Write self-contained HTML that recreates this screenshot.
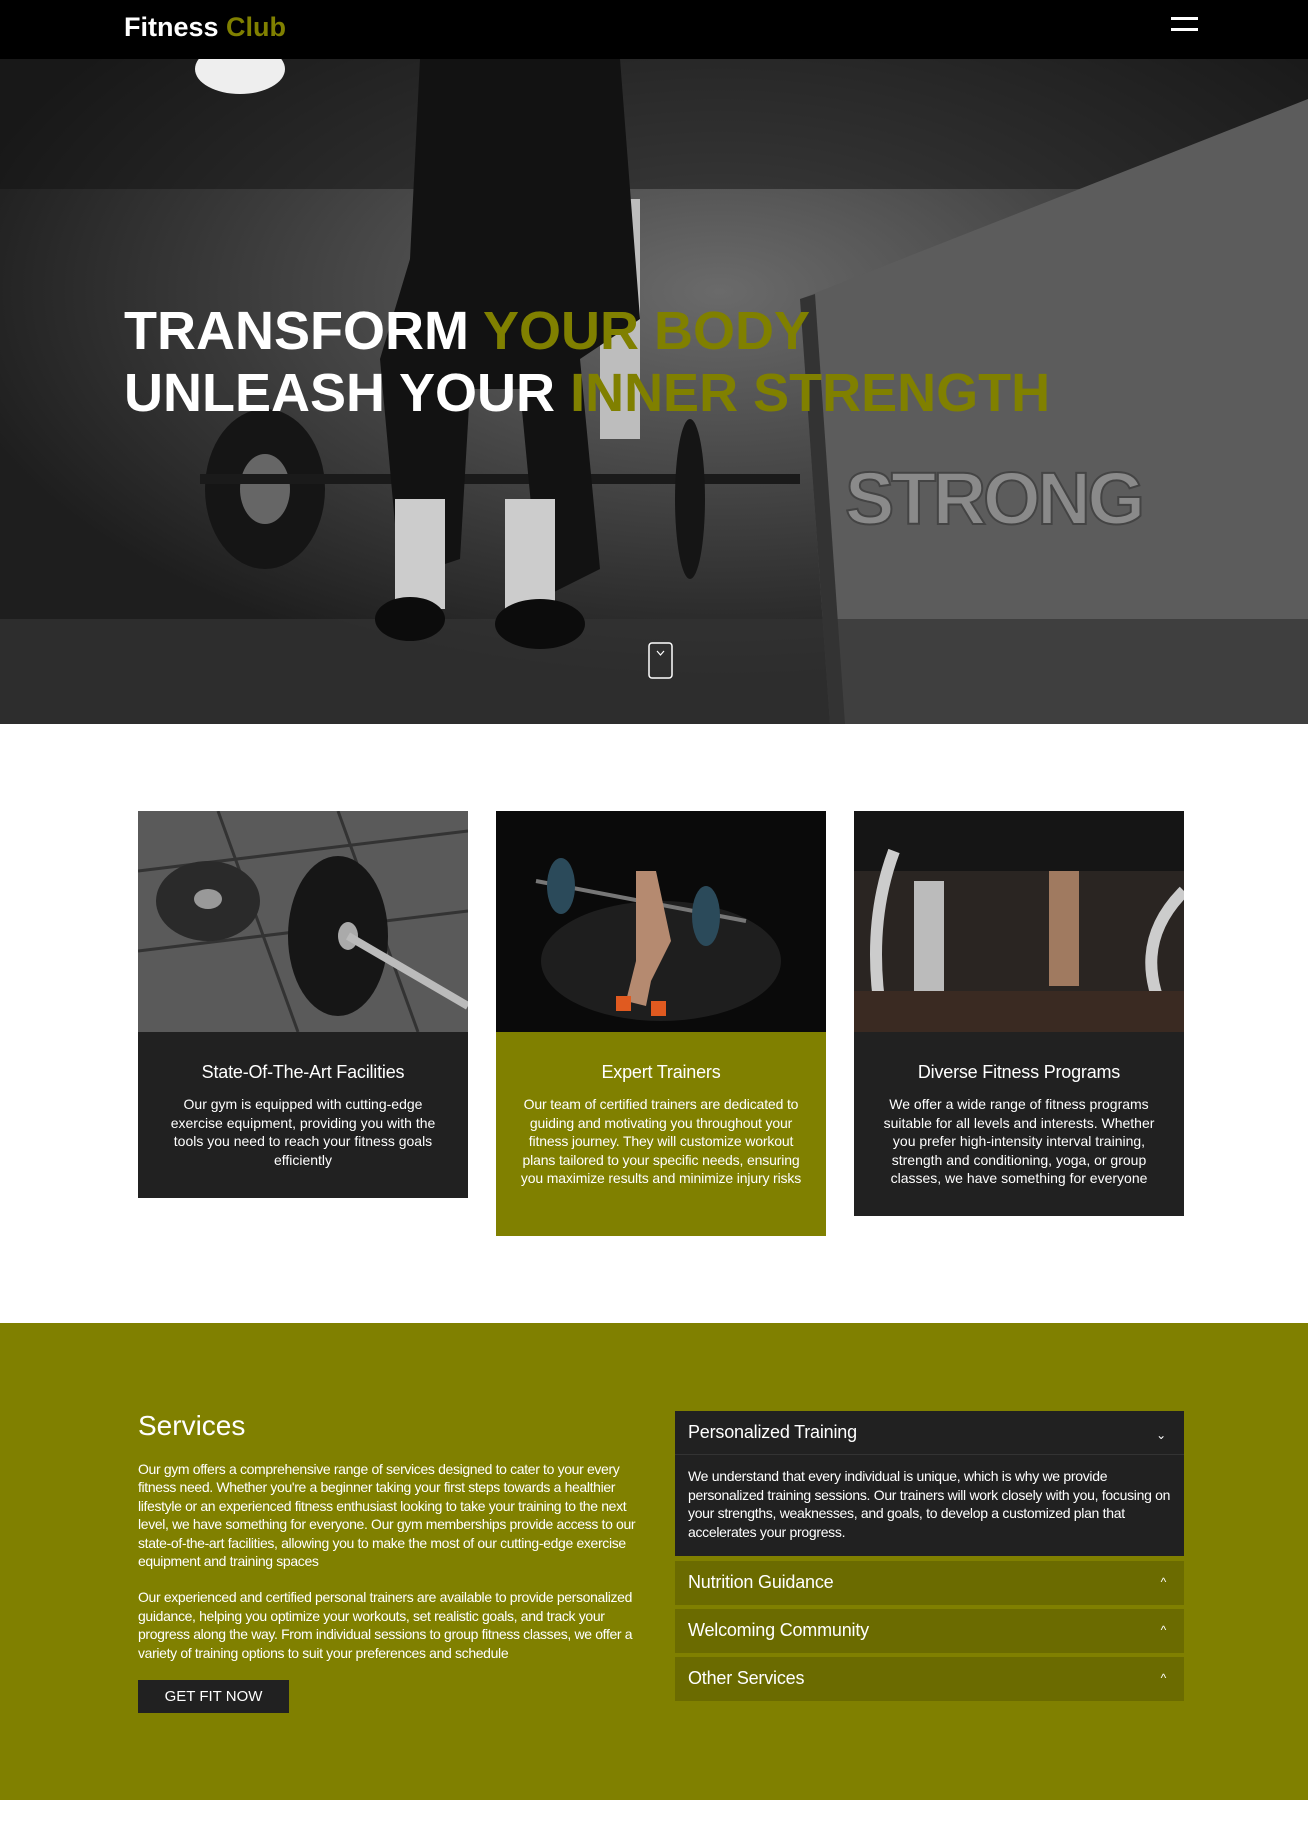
<!DOCTYPE html>
<html><head><meta charset="utf-8">
<style>
*{margin:0;padding:0;box-sizing:border-box}
body{width:1308px;height:1836px;background:#fff;font-family:"Liberation Sans",Arial,sans-serif;position:relative;overflow:hidden}
.nav{position:absolute;left:0;top:0;width:1308px;height:59px;background:#000}
.logo{position:absolute;left:124px;top:12px;font-size:27px;font-weight:bold;color:#fff}
.logo span{color:#808000}
.ham{position:absolute;left:1171px;width:27px;height:3px;background:#fff}
.hero{position:absolute;left:0;top:59px;width:1308px;height:665px;overflow:hidden;background:#2a2a2a}
.h1{position:absolute;left:124px;font-size:54px;font-weight:bold;color:#fff;white-space:nowrap;line-height:62px}
.h1 span{color:#808000}
.card{position:absolute;top:811px;width:330px;color:#fff;text-align:center}
.card .img{height:221px;overflow:hidden;position:relative}
.card h3{font-size:18px;font-weight:normal;margin-top:29px;line-height:22px;letter-spacing:-0.2px}
.card p{font-size:14px;line-height:18.5px;margin:12px 26px 0}
.green{position:absolute;left:0;top:1323px;width:1308px;height:477px;background:#808000}
.svc{position:absolute;left:138px;top:1410px;width:515px;color:#fff}
.svc h2{font-size:28px;font-weight:normal;line-height:32px}
.svc p{font-size:14px;line-height:18.4px;margin-top:18px;letter-spacing:-0.35px}
.btn{position:absolute;left:138px;top:1680px;width:151px;height:33px;background:#212121;color:#fff;font-size:15px;text-align:center;line-height:33px}
.acc{position:absolute;left:675px;width:509px;color:#fff}
.acc .hd{height:44px;padding:0 13px;font-size:18px;line-height:42px;position:relative;letter-spacing:-0.2px}
.acc .ar{position:absolute;right:18px;top:0;font-size:12px}
</style></head><body>
<div class="nav">
<div class="logo">Fitness <span>Club</span></div>
<div class="ham" style="top:17px"></div><div class="ham" style="top:28px"></div>
</div>
<div class="hero">
<svg width="1308" height="665" style="position:absolute;left:0;top:0">
<defs><radialGradient id="g1" cx="0.55" cy="0.35" r="0.6"><stop offset="0" stop-color="#6a6a6a"/><stop offset="1" stop-color="#1e1e1e"/></radialGradient></defs>
<rect width="1308" height="665" fill="url(#g1)"/>
<rect x="0" y="0" width="1308" height="130" fill="#111" opacity=".5"/>
<polygon points="800,240 1308,40 1308,665 830,665" fill="#5c5c5c"/>
<polygon points="800,240 830,665 845,665 815,235" fill="#333"/>
<rect x="600" y="140" width="40" height="240" fill="#bdbdbd"/>
<rect x="0" y="560" width="1308" height="105" fill="#333" opacity=".7"/>
<ellipse cx="265" cy="430" rx="60" ry="80" fill="#151515"/>
<ellipse cx="265" cy="430" rx="25" ry="35" fill="#666"/>
<rect x="200" y="415" width="600" height="10" fill="#1a1a1a"/>
<ellipse cx="690" cy="440" rx="15" ry="80" fill="#151515"/>
<path d="M420 0 L620 0 L640 260 L580 300 L600 510 L540 540 L520 330 L470 330 L460 500 L400 520 L380 300 L410 200 Z" fill="#121212"/>
<rect x="395" y="440" width="50" height="110" fill="#ccc"/>
<rect x="505" y="440" width="50" height="110" fill="#ccc"/>
<ellipse cx="410" cy="560" rx="35" ry="22" fill="#0c0c0c"/>
<ellipse cx="540" cy="565" rx="45" ry="25" fill="#0c0c0c"/>
<ellipse cx="240" cy="10" rx="45" ry="25" fill="#eee"/>
<text x="845" y="465" font-family="Liberation Sans" font-weight="bold" font-size="74" fill="#8a8a8a" stroke="#444" stroke-width="2" textLength="300">STRONG</text>
<rect x="649" y="584" width="23" height="35" rx="3" fill="none" stroke="#fff" stroke-width="1.5"/>
<path d="M657 592 L660.5 596 L664 592" stroke="#fff" fill="none" stroke-width="1.2"/>
</svg>
<div class="h1" style="top:241px">TRANSFORM <span>YOUR BODY</span></div>
<div class="h1" style="top:303px">UNLEASH YOUR <span>INNER STRENGTH</span></div>
</div>

<div class="card" style="left:138px;height:387px;background:#212121">
<div class="img"><svg width="330" height="221"><rect width="330" height="221" fill="#5a5a5a"/>
<path d="M0 60 L330 20 M0 140 L330 100 M80 0 L160 221 M200 0 L280 221" stroke="#333" stroke-width="3"/>
<ellipse cx="70" cy="90" rx="52" ry="40" fill="#2a2a2a"/><ellipse cx="70" cy="88" rx="14" ry="10" fill="#999"/>
<ellipse cx="200" cy="125" rx="50" ry="80" fill="#161616"/><ellipse cx="210" cy="125" rx="10" ry="14" fill="#aaa"/>
<path d="M210 125 L330 195" stroke="#bbb" stroke-width="8"/></svg></div>
<h3>State-Of-The-Art Facilities</h3>
<p>Our gym is equipped with cutting-edge exercise equipment, providing you with the tools you need to reach your fitness goals efficiently</p>
</div>
<div class="card" style="left:496px;height:425px;background:#808000">
<div class="img"><svg width="330" height="221"><rect width="330" height="221" fill="#0a0a0a"/>
<ellipse cx="165" cy="150" rx="120" ry="60" fill="#1e1e1e"/>
<path d="M40 70 L250 110" stroke="#777" stroke-width="4"/>
<ellipse cx="65" cy="75" rx="14" ry="28" fill="#2b4a5a"/><ellipse cx="210" cy="105" rx="14" ry="30" fill="#2b4a5a"/>
<path d="M140 60 L160 60 L175 130 L155 170 L150 195 L130 190 L140 150 Z" fill="#b58a70"/>
<rect x="120" y="185" width="15" height="15" fill="#e05a20"/><rect x="155" y="190" width="15" height="15" fill="#e05a20"/></svg></div>
<h3>Expert Trainers</h3>
<p style="margin:12px 22px 0;letter-spacing:-0.15px">Our team of certified trainers are dedicated to guiding and motivating you throughout your fitness journey. They will customize workout plans tailored to your specific needs, ensuring you maximize results and minimize injury risks</p>
</div>
<div class="card" style="left:854px;height:405px;background:#212121">
<div class="img"><svg width="330" height="221"><rect width="330" height="221" fill="#2a2522"/>
<rect x="0" y="0" width="330" height="60" fill="#151515"/>
<path d="M40 40 Q10 120 30 221" stroke="#ccc" stroke-width="12" fill="none"/>
<path d="M330 80 Q270 140 320 221" stroke="#ccc" stroke-width="12" fill="none"/>
<rect x="60" y="70" width="30" height="110" fill="#bbb"/><rect x="195" y="60" width="30" height="115" fill="#a07a60"/>
<rect x="0" y="180" width="330" height="41" fill="#3a2a22"/></svg></div>
<h3>Diverse Fitness Programs</h3>
<p>We offer a wide range of fitness programs suitable for all levels and interests. Whether you prefer high-intensity interval training, strength and conditioning, yoga, or group classes, we have something for everyone</p>
</div>

<div class="green"></div>
<div class="svc">
<h2>Services</h2>
<p>Our gym offers a comprehensive range of services designed to cater to your every fitness need. Whether you're a beginner taking your first steps towards a healthier lifestyle or an experienced fitness enthusiast looking to take your training to the next level, we have something for everyone. Our gym memberships provide access to our state-of-the-art facilities, allowing you to make the most of our cutting-edge exercise equipment and training spaces</p>
<p>Our experienced and certified personal trainers are available to provide personalized guidance, helping you optimize your workouts, set realistic goals, and track your progress along the way. From individual sessions to group fitness classes, we offer a variety of training options to suit your preferences and schedule</p>
</div>
<div class="btn">GET FIT NOW</div>

<div class="acc" style="top:1411px;background:#212121;height:145px">
<div class="hd" style="border-bottom:1px solid #333">Personalized Training<span class="ar" style="top:3px">&#8964;</span></div>
<p style="font-size:14px;line-height:18.5px;padding:12px 13px 0;letter-spacing:-0.3px">We understand that every individual is unique, which is why we provide personalized training sessions. Our trainers will work closely with you, focusing on your strengths, weaknesses, and goals, to develop a customized plan that accelerates your progress.</p>
</div>
<div class="acc" style="top:1561px;background:#6b6b00"><div class="hd">Nutrition Guidance<span class="ar">^</span></div></div>
<div class="acc" style="top:1609px;background:#6b6b00"><div class="hd">Welcoming Community<span class="ar">^</span></div></div>
<div class="acc" style="top:1657px;background:#6b6b00"><div class="hd">Other Services<span class="ar">^</span></div></div>
</body></html>
